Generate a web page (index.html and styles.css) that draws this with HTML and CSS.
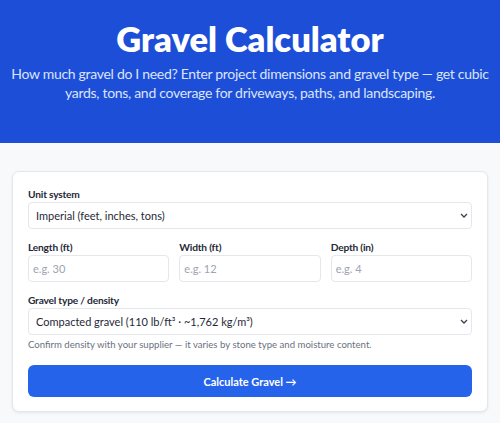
FILE: index.html
```html
<!DOCTYPE html>
<html lang="en">
<head>
    <meta charset="UTF-8">
    <meta name="viewport" content="width=device-width, initial-scale=1.0">
    <title>Gravel Calculator</title>
    <link rel="stylesheet" href="styles.css">
</head>
<body>
    <header class="hero">
        <h1>Gravel Calculator</h1>
        <p>How much gravel do I need? Enter project dimensions and gravel type — get cubic yards, tons, and coverage for driveways, paths, and landscaping.</p>
    </header>

    <main class="page">
        <form class="card">
            <div class="field">
                <label for="units">Unit system</label>
                <select id="units">
                    <option>Imperial (feet, inches, tons)</option>
                    <option>Metric (meters, cm, tonnes)</option>
                </select>
            </div>

            <div class="dims">
                <div class="field">
                    <label for="length">Length (ft)</label>
                    <input id="length" type="number" placeholder="e.g. 30">
                </div>
                <div class="field">
                    <label for="width">Width (ft)</label>
                    <input id="width" type="number" placeholder="e.g. 12">
                </div>
                <div class="field">
                    <label for="depth">Depth (in)</label>
                    <input id="depth" type="number" placeholder="e.g. 4">
                </div>
            </div>

            <div class="field">
                <label for="gravel">Gravel type / density</label>
                <select id="gravel">
                    <option>Compacted gravel (110 lb/ft³ · ~1,762 kg/m³)</option>
                    <option>Pea gravel (96 lb/ft³ · ~1,538 kg/m³)</option>
                    <option>Crushed stone (100 lb/ft³ · ~1,602 kg/m³)</option>
                </select>
                <p class="hint">Confirm density with your supplier — it varies by stone type and moisture content.</p>
            </div>

            <button type="button" class="btn">Calculate Gravel →</button>
        </form>
    </main>
</body>
</html>
```

FILE: styles.css
```css
* {
    box-sizing: border-box;
}
body {
    margin: 0;
    font-family: Lato, "Noto Sans", Arial, sans-serif;
    background-color: #f8f9fb;
    color: #1f2937;
}
.hero {
    background-color: #1d4ed8;
    color: #fff;
    text-align: center;
    height: 143px;
    padding: 17px 6px 0;
}
.hero h1 {
    margin: 0;
    font-size: 34.5px;
    font-weight: 800;
    line-height: 44px;
}
.hero p {
    margin: 3px 0 0;
    font-size: 14px;
    letter-spacing: -0.3px;
    line-height: 19px;
    color: #dbe4fb;
}
.page {
    padding: 28px 12px 10px;
}
.card {
    background-color: #fff;
    border: 1px solid #e5e7eb;
    border-radius: 7px;
    box-shadow: 0 1px 3px rgba(0, 0, 0, 0.08);
    padding: 14px 15px;
    display: flex;
    flex-direction: column;
    gap: 10px;
}
.field {
    display: flex;
    flex-direction: column;
}
.field label {
    font-size: 10.2px;
    font-weight: 700;
    letter-spacing: -0.2px;
    line-height: 16px;
    color: #1f2937;
}
.dims {
    display: grid;
    grid-template-columns: repeat(3, 1fr);
    gap: 10px;
}
select,
input {
    font-family: inherit;
    font-size: 11px;
    height: 27px;
    border: 1px solid #e5e7eb;
    border-radius: 4px;
    background-color: #fff;
    color: #1f2937;
    width: 100%;
}
input {
    padding: 0 4px;
}
input::placeholder {
    color: #9ca3af;
}
select {
    padding: 0 7px;
    -webkit-appearance: none;
    appearance: none;
    background-image: url("data:image/svg+xml,%3Csvg xmlns='http://www.w3.org/2000/svg' width='8' height='5' viewBox='0 0 8 5'%3E%3Cpath d='M1 1l3 3 3-3' fill='none' stroke='%23374151' stroke-width='1.3'/%3E%3C/svg%3E");
    background-repeat: no-repeat;
    background-position: right 3px center;
}
.hint {
    margin: 3px 0 0;
    font-size: 9.6px;
    line-height: 14px;
    color: #6b7280;
}
.btn {
    margin-top: 3px;
    height: 32px;
    border: none;
    border-radius: 6px;
    background-color: #2563eb;
    color: #fff;
    font-family: inherit;
    font-size: 11px;
    font-weight: 700;
}
```
